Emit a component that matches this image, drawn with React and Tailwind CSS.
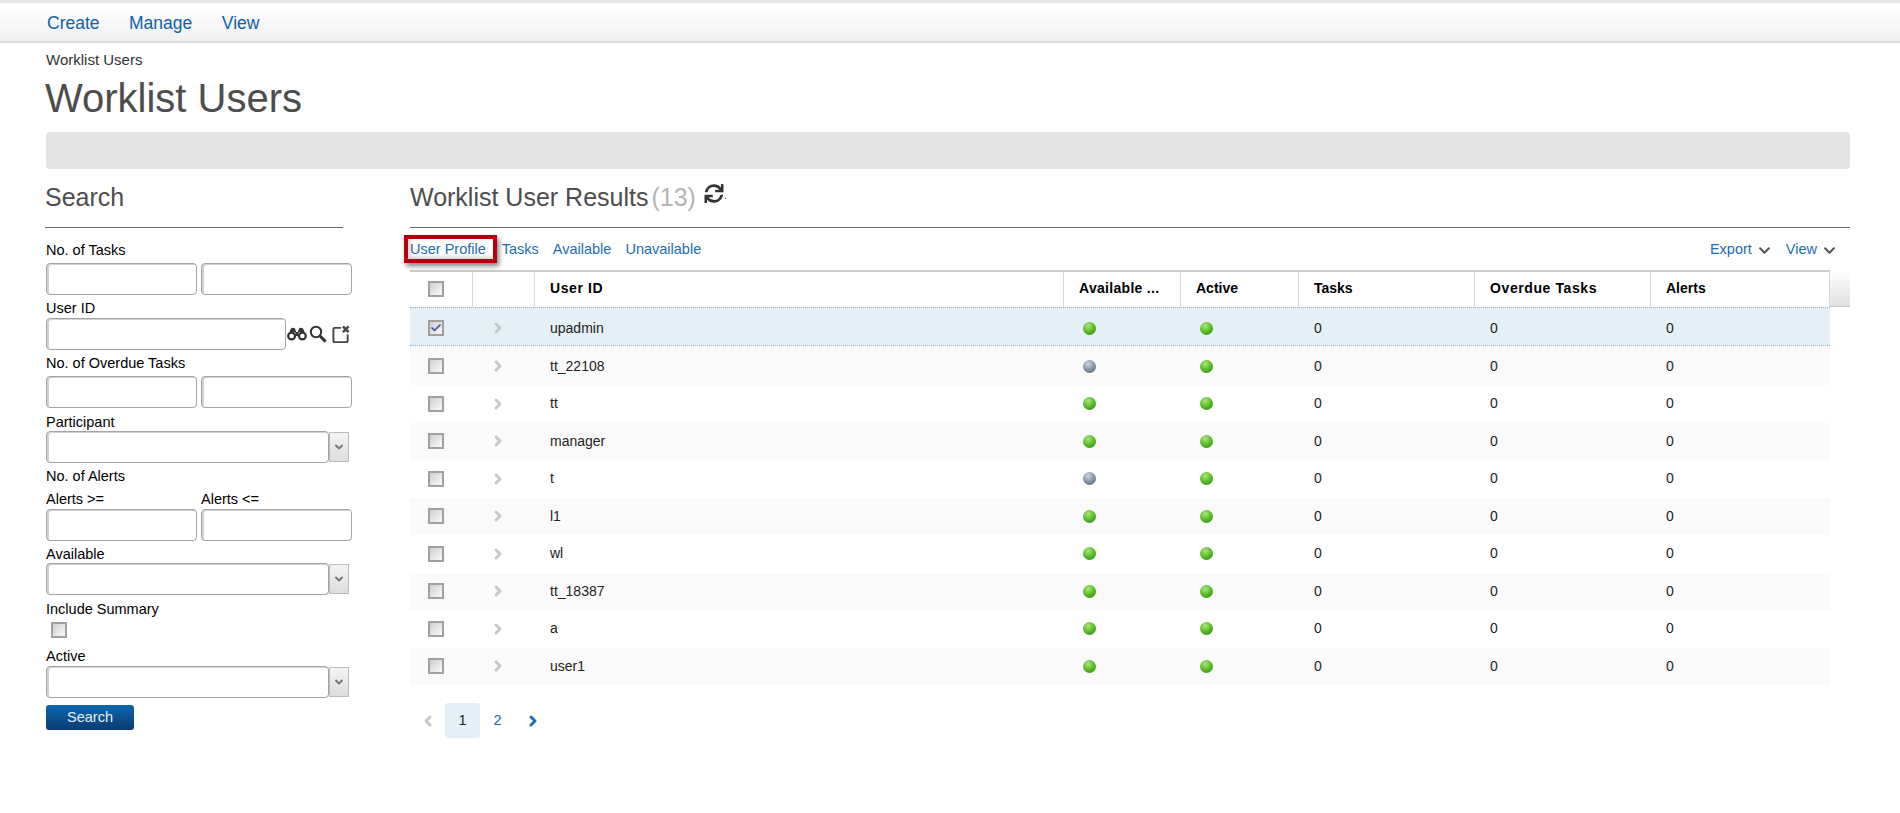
import { Check, ChevronDown, ChevronLeft, ChevronRight } from 'lucide-react';
import { FaChevronDown, FaSync } from 'react-icons/fa';

const users = [
    { id: 'upadmin', available: true, selected: true, size: 'h-[39px] pt-[3px]' },
    { id: 'tt_22108', available: false, size: 'h-[39px] pt-[1px]' },
    { id: 'tt', available: true, size: 'h-[37.5px]' },
    { id: 'manager', available: true, size: 'h-[37.5px]' },
    { id: 't', available: false, size: 'h-[37.5px]' },
    { id: 'l1', available: true, size: 'h-[37.5px]' },
    { id: 'wl', available: true, size: 'h-[37.5px]' },
    { id: 'tt_18387', available: true, size: 'h-[37.5px]' },
    { id: 'a', available: true, size: 'h-[37.5px]' },
    { id: 'user1', available: true, size: 'h-[37.5px]' },
];

const headers = [
    { title: 'User ID', spacing: 'tracking-[0.6px]' },
    { title: 'Available ...', spacing: 'tracking-[0.3px]' },
    { title: 'Active', spacing: '' },
    { title: 'Tasks', spacing: '' },
    { title: 'Overdue Tasks', spacing: 'tracking-[0.6px]' },
    { title: 'Alerts', spacing: '' },
];

const columns = 'grid grid-cols-[62px_62px_529px_117px_118px_176px_176px_180px]';

function Label({ children, className = '' }) {
    return <div className={`h-4 text-[14.5px] leading-[18px] text-black ${className}`}>{children}</div>;
}

function TextBox({ className = 'w-[151px]' }) {
    return (
        <input
            type="text"
            className={`h-8 rounded-[4px] border border-[#a3a3a3] bg-white shadow-[inset_2px_1px_0_#d2d2d2] outline-none ${className}`}
        />
    );
}

function RangeInputs({ className = '' }) {
    return (
        <div className={`flex gap-1 ${className}`}>
            <TextBox />
            <TextBox />
        </div>
    );
}

function SelectBox({ className = '' }) {
    return (
        <div className={`flex items-center ${className}`}>
            <TextBox className="w-[283px]" />
            <div className="flex h-[30px] w-5 items-center justify-center border border-[#bbbbbb] bg-gradient-to-b from-[#f4f4f4] to-[#dddddd]">
                <ChevronDown className="h-3 w-3 text-[#777777]" strokeWidth={4} />
            </div>
        </div>
    );
}

function CheckBox({ checked, className = '' }) {
    return (
        <div className={`flex h-4 w-4 items-center justify-center border-2 border-[#a0a0a0] bg-gradient-to-br from-[#cfcfcf] to-[#fafafa] ${className}`}>
            {checked && <Check className="h-3 w-3 text-[#3f4f9a]" strokeWidth={3.5} />}
        </div>
    );
}

function Dot({ on }) {
    const tone = on
        ? 'bg-[radial-gradient(circle_at_40%_30%,#a8e878,#4fb521_55%,#2a7f12)]'
        : 'bg-[radial-gradient(circle_at_40%_30%,#ccd5df,#7f8d9e_55%,#4e5c6c)]';
    return <div className={`h-[13px] w-[13px] rounded-full ${tone}`} />;
}

function BinocularsIcon() {
    return (
        <svg viewBox="0 0 20 14" className="h-[14px] w-5 text-[#333333]" fill="none" stroke="currentColor">
            <circle cx="4.6" cy="9" r="3.4" strokeWidth="2.2" />
            <circle cx="15.4" cy="9" r="3.4" strokeWidth="2.2" />
            <path d="M3 5l1.5-3.6h3L9 6.5h2l1.5-5.1h3L17 5" fill="currentColor" strokeWidth="1" />
            <path d="M8 8h4" strokeWidth="2" />
        </svg>
    );
}

function SearchIcon() {
    return (
        <svg viewBox="0 0 18 18" className="h-[18px] w-[18px] text-[#333333]" fill="none" stroke="currentColor">
            <circle cx="7" cy="7" r="5.2" strokeWidth="2" />
            <path d="M11 11l5.6 5.6" strokeWidth="3" />
        </svg>
    );
}

function ClearIcon() {
    return (
        <svg viewBox="0 0 20 20" className="h-[19px] w-[19px] text-[#444444]" fill="none" stroke="currentColor">
            <path d="M9.5 3H2.5a1 1 0 0 0-1 1v13a1 1 0 0 0 1 1h12a2 2 0 0 0 2-2V10" strokeWidth="2" />
            <path d="M11.5 1.5l6 6M17.5 1.5l-6 6" strokeWidth="2.6" />
        </svg>
    );
}

function SearchForm() {
    return (
        <aside className="w-[364px] shrink-0">
            <h2 className="-ml-[1px] flex h-[59px] w-[298px] items-center border-b border-[#666666] text-[25px] text-[#4d4d4d]">Search</h2>
            <Label className="mt-[13px]">No. of Tasks</Label>
            <RangeInputs className="mt-[6px]" />
            <Label className="mt-1">User ID</Label>
            <div className="mt-[3px] flex items-center">
                <TextBox className="w-[240px]" />
                <div className="ml-[1px] flex items-center">
                    <BinocularsIcon />
                    <div className="ml-[2px]"><SearchIcon /></div>
                    <div className="ml-[5px]"><ClearIcon /></div>
                </div>
            </div>
            <Label className="mt-1">No. of Overdue Tasks</Label>
            <RangeInputs className="mt-[6px]" />
            <Label className="mt-[5px]">Participant</Label>
            <SelectBox className="mt-[2px]" />
            <Label className="mt-1">No. of Alerts</Label>
            <div className="mt-[7px] flex">
                <Label className="w-[155px]">{'Alerts >='}</Label>
                <Label>{'Alerts <='}</Label>
            </div>
            <RangeInputs className="mt-[3px]" />
            <Label className="mt-1">Available</Label>
            <SelectBox className="mt-[2px]" />
            <Label className="mt-[5px]">Include Summary</Label>
            <CheckBox className="ml-[5px] mt-[6px]" />
            <Label className="mt-[9px]">Active</Label>
            <SelectBox className="mt-[3px]" />
            <button className="mt-[7px] h-[25px] w-[88px] rounded-[3px] bg-gradient-to-b from-[#0b68b0] to-[#0a3b72] pt-[1px] text-[14.5px] text-[#e8eef5]">
                Search
            </button>
        </aside>
    );
}

function ResultsTable() {
    return (
        <div>
            <div className="flex">
                <div className={`${columns} h-[37px] w-[1420px] border-r border-t-2 border-r-[#dcdcdc] border-t-[#cccccc] text-[14px] font-bold text-black`}>
                    <div className="flex items-center justify-center pb-[2px] pr-[10px]"><CheckBox /></div>
                    <div className="border-l border-[#dcdcdc]" />
                    {headers.map((header) => (
                        <div key={header.title} className={`flex items-center border-l border-[#dcdcdc] pb-[2px] pl-[15px] ${header.spacing}`}>
                            {header.title}
                        </div>
                    ))}
                </div>
                <div className="flex-1 border-b border-[#c8c8c8] bg-gradient-to-b from-white to-[#e0e0e0]" />
            </div>
            <div className="w-[1420px] text-[14px] text-[#222222]">
                {users.map((user, index) => (
                    <div
                        key={user.id}
                        className={`${columns} ${user.size} items-center ${
                            user.selected
                                ? 'border-y border-dotted border-[#8fb4e0] bg-[#e4eff6]'
                                : index % 2 === 1
                                  ? 'bg-[#fafafa]'
                                  : 'bg-white'
                        }`}
                    >
                        <div className="flex justify-center pr-[10px]"><CheckBox checked={user.selected} /></div>
                        <div className="flex justify-center pr-[10px]"><ChevronRight className="h-4 w-4 text-[#c8c8c8]" strokeWidth={4.5} /></div>
                        <div className="pl-4">{user.id}</div>
                        <div className="pl-5"><Dot on={user.available} /></div>
                        <div className="pl-5"><Dot on /></div>
                        <div className="pl-4">0</div>
                        <div className="pl-4">0</div>
                        <div className="pl-4">0</div>
                    </div>
                ))}
            </div>
        </div>
    );
}

function Results() {
    return (
        <section className="min-w-0 flex-1">
            <div className="flex h-[59px] items-center border-b border-[#666666]">
                <h2 className="text-[25px] text-[#4d4d4d]">Worklist User Results</h2>
                <span className="ml-[3px] text-[25px] text-[#b4b4b4]">(13)</span>
                <FaSync className="ml-2 mb-[10px] h-[19px] w-[20px] text-[#333333]" />
                <span className="ml-[1px] mt-[1px] h-[1px] w-[1px] bg-[#555555]" />
            </div>
            <div className="flex h-[42px] items-center justify-between pt-[2px] text-[14.5px] text-[#1b6db4]">
                <div className="flex items-center">
                    <div className="relative">
                        User Profile
                        <div className="absolute -left-[6px] -top-[4px] h-[28px] w-[93px] border-[4px] border-[#b2000f] shadow-[2px_3px_5px_rgba(0,0,0,0.5),inset_2px_-2px_4px_rgba(0,0,0,0.2)]" />
                    </div>
                    <span className="ml-4">Tasks</span>
                    <span className="ml-[14px]">Available</span>
                    <span className="ml-[14px]">Unavailable</span>
                </div>
                <div className="flex items-center pr-[14px]">
                    <span>Export</span>
                    <FaChevronDown className="ml-[6px] h-[13px] w-[13px] text-[#555555]" />
                    <span className="ml-[15px]">View</span>
                    <FaChevronDown className="ml-[6px] h-[13px] w-[13px] text-[#555555]" />
                </div>
            </div>
            <ResultsTable />
            <div className="mt-[18px] flex h-[35px] items-stretch text-[14.5px]">
                <div className="flex w-[35px] items-center justify-center"><ChevronLeft className="h-4 w-4 text-[#c8c8c8]" strokeWidth={4.5} /></div>
                <div className="flex w-[35px] items-center justify-center rounded-[3px] bg-[#e4eff6] text-[#222222]">1</div>
                <div className="flex w-[35px] items-center justify-center text-[#1b6db4]">2</div>
                <div className="flex w-[35px] items-center justify-center"><ChevronRight className="h-4 w-4 text-[#1b6db4]" strokeWidth={4.5} /></div>
            </div>
        </section>
    );
}

export default function App() {
    return (
        <div className="min-h-[813px] bg-white font-['Liberation_Sans',Arial,sans-serif]">
            <div className="h-[3px] bg-[#e8e8e8]" />
            <nav className="mt-[2px] flex h-[38px] items-center gap-[29.5px] border-b-2 border-[#dddddd] bg-gradient-to-b from-white to-[#f0f0f0] pl-[47px] pt-[1px] text-[17.5px] text-[#0b62ad]">
                <span>Create</span>
                <span>Manage</span>
                <span>View</span>
            </nav>
            <div className="pl-[46px] pr-[50px]">
                <div className="mt-[7px] h-5 text-[15px] leading-5 text-[#333333]">Worklist Users</div>
                <h1 className="-ml-[1px] mt-1 h-12 text-[40px] leading-[48px] text-[#4d4d4d]">Worklist Users</h1>
                <div className="mt-[10px] h-[37px] rounded-[4px] bg-[#e4e4e4]" />
                <div className="flex">
                    <SearchForm />
                    <Results />
                </div>
            </div>
        </div>
    );
}
